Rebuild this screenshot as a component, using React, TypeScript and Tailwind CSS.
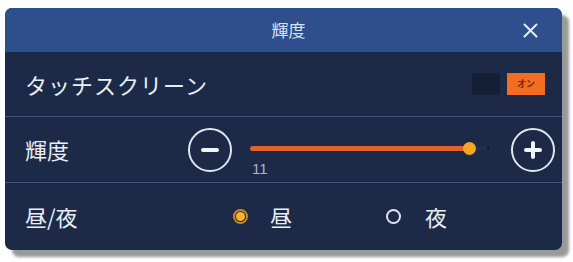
import React, { useState } from 'react';

const jp = { fontFamily: '"Noto Sans CJK JP", "Noto Sans", sans-serif' };

const RoundButton: React.FC<{ plus?: boolean }> = ({ plus }) => (
    <div className="w-[44px] h-[44px] rounded-full border-2 border-[#dfe6f0] flex items-center justify-center shrink-0">
        <svg width="20" height="20" viewBox="0 0 20 20">
            <line x1="3" y1="10" x2="17" y2="10" stroke="#f2f5fa" strokeWidth="4" strokeLinecap="round" />
            {plus && <line x1="10" y1="3" x2="10" y2="17" stroke="#f2f5fa" strokeWidth="4" strokeLinecap="round" />}
        </svg>
    </div>
);

const App: React.FC = () => {
    const [mode, setMode] = useState<'day' | 'night'>('day');
    const value = 11;

    return (
        <div className="w-[573px] h-[262px] bg-white pt-[8px] pl-[5px]" style={jp}>
            <div className="w-[557px] h-[242px] rounded-[7px] overflow-hidden bg-[#1c2a47] shadow-[7px_7px_3px_rgba(110,110,110,0.7)] flex flex-col">
                {/* header */}
                <div className="h-[44px] bg-[#2e4e8c] flex items-center relative shrink-0">
                    <span className="flex-1 text-center text-[17px] text-[#d8e2f2] pl-[10px]">輝度</span>
                    <svg className="absolute right-[24px] top-[15px]" width="15" height="15" viewBox="0 0 15 15">
                        <path d="M1.5 1.5 L13.5 13.5 M13.5 1.5 L1.5 13.5" stroke="#e6ecf7" strokeWidth="2" strokeLinecap="round" />
                    </svg>
                </div>

                {/* touch screen */}
                <div className="h-[65px] flex items-center pl-[20px] pr-[17px] border-b border-[#3e5274]">
                    <span className="text-[22px] text-[#e9eef6] tracking-[1px]">タッチスクリーン</span>
                    <div className="ml-auto flex items-center gap-[7px]">
                        <div className="w-[28px] h-[22px] bg-[#152036]" />
                        <div className="w-[38px] h-[22px] bg-[#f26d21] flex items-center justify-center text-[9px] font-bold text-[#7a2a0c]">
                            オン
                        </div>
                    </div>
                </div>

                {/* brightness */}
                <div className="h-[66px] flex items-center pl-[20px] pr-[7px] border-b border-[#3e5274]">
                    <span className="w-[163px] text-[22px] text-[#e9eef6]">輝度</span>
                    <RoundButton />
                    <div className="flex-1 relative h-full ml-[18px] mr-[20px]">
                        <div className="absolute left-0 right-0 top-[30px] h-[3px] bg-[#22304d]" />
                        <div className="absolute left-0 w-[220px] top-[29px] h-[5px] rounded-full bg-[#e2622b]" />
                        <div className="absolute left-[213px] top-[25px] w-[13px] h-[13px] rounded-full bg-[#f6a623]" />
                        <div className="absolute left-[237px] top-[30px] w-[3px] h-[3px] rounded-full bg-[#0f1829]" />
                        <span className="absolute left-[2px] top-[41px] text-[15px] text-[#aab6c8]" style={{ fontFamily: '"Liberation Sans", sans-serif' }}>
                            {value}
                        </span>
                    </div>
                    <RoundButton plus />
                </div>

                {/* day / night */}
                <div className="flex-1 flex items-center pl-[20px]">
                    <span className="w-[208px] text-[22px] text-[#e9eef6]">昼/夜</span>
                    <button onClick={() => setMode('day')} className="flex items-center gap-[22px]">
                        <span className={`w-[15px] h-[15px] rounded-full flex items-center justify-center border-2 ${mode === 'day' ? 'border-[#c98a2a]' : 'border-[#dfe6f0]'}`}>
                            {mode === 'day' && <span className="w-[9px] h-[9px] rounded-full bg-[#f6b43a]" />}
                        </span>
                        <span className="text-[22px] text-[#e9eef6]">昼</span>
                    </button>
                    <button onClick={() => setMode('night')} className="flex items-center gap-[24px] ml-[94px]">
                        <span className={`w-[15px] h-[15px] rounded-full flex items-center justify-center border-2 ${mode === 'night' ? 'border-[#c98a2a]' : 'border-[#dfe6f0]'}`}>
                            {mode === 'night' && <span className="w-[9px] h-[9px] rounded-full bg-[#f6b43a]" />}
                        </span>
                        <span className="text-[22px] text-[#e9eef6]">夜</span>
                    </button>
                </div>
            </div>
        </div>
    );
};

export default App;
